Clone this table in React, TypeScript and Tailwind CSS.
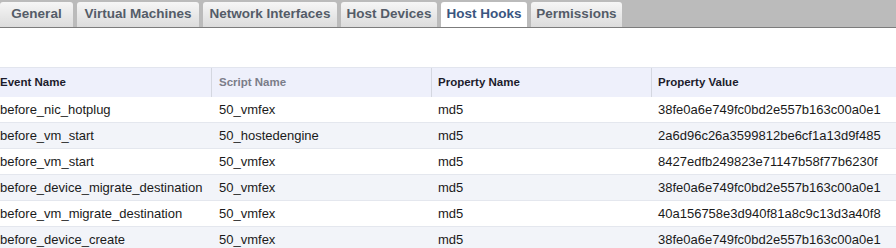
const TABS = [
  { label: "General", w: "w-[73px]" },
  { label: "Virtual Machines", w: "w-[122px]" },
  { label: "Network Interfaces", w: "w-[134px]" },
  { label: "Host Devices", w: "w-[96px]" },
  { label: "Host Hooks", w: "w-[86px]", active: true },
  { label: "Permissions", w: "w-[91px]" },
];

const COLUMNS = [
  { label: "Event Name", pad: "pl-0" },
  { label: "Script Name", pad: "pl-[7px]", muted: true },
  { label: "Property Name", pad: "pl-[6px]" },
  { label: "Property Value", pad: "pl-[6px]" },
];

const ROWS = [
  ["before_nic_hotplug", "50_vmfex", "md5", "38fe0a6e749fc0bd2e557b163c00a0e1"],
  ["before_vm_start", "50_hostedengine", "md5", "2a6d96c26a3599812be6cf1a13d9f485"],
  ["before_vm_start", "50_vmfex", "md5", "8427edfb249823e71147b58f77b6230f"],
  ["before_device_migrate_destination", "50_vmfex", "md5", "38fe0a6e749fc0bd2e557b163c00a0e1"],
  ["before_vm_migrate_destination", "50_vmfex", "md5", "40a156758e3d940f81a8c9c13d3a40f8"],
  ["before_device_create", "50_vmfex", "md5", "38fe0a6e749fc0bd2e557b163c00a0e1"],
];

export default function App() {
  return (
    <div className="h-[248px] w-[896px] overflow-hidden bg-white font-['Liberation_Sans',Arial,sans-serif]">
      {/* Tab strip */}
      <div className="flex h-[28px] items-end gap-[4px] border-b border-[#7c7c7c] bg-[#bbbbbb]">
        {TABS.map((t) => (
          <div
            key={t.label}
            className={`${t.w} flex h-[25px] items-center justify-center rounded-t-[3px] text-[13.5px] font-bold ${
              t.active
                ? "bg-white text-[#3a5580]"
                : "bg-gradient-to-b from-[#f6f6f6] to-[#dcdcdc] text-[#545c68]"
            }`}
          >
            {t.label}
          </div>
        ))}
      </div>

      {/* Table */}
      <div className="mt-[39px]">
        <div className="grid h-[30px] grid-cols-[212px_220px_220px_1fr] border-t border-[#e2e5ee] bg-[#eef0fb]">
          {COLUMNS.map((c, i) => (
            <div
              key={c.label}
              className={`${c.pad} flex items-center text-[11.5px] font-bold ${
                i < 3 ? "border-r border-[#d4d7e0]" : ""
              } ${c.muted ? "text-[#7b7d89]" : "text-[#1c1c2c]"}`}
            >
              {c.label}
            </div>
          ))}
        </div>
        {ROWS.map((r, ri) => (
          <div
            key={ri}
            className={`grid h-[26px] grid-cols-[212px_220px_220px_1fr] border-b border-[#e4e7ee] text-[13px] text-[#1a1a1a] ${
              ri % 2 === 0 ? "bg-white" : "bg-[#f2f4f9]"
            }`}
          >
            {r.map((cell, ci) => (
              <div key={ci} className={`${COLUMNS[ci].pad} flex items-center`}>
                {cell}
              </div>
            ))}
          </div>
        ))}
      </div>
    </div>
  );
}
